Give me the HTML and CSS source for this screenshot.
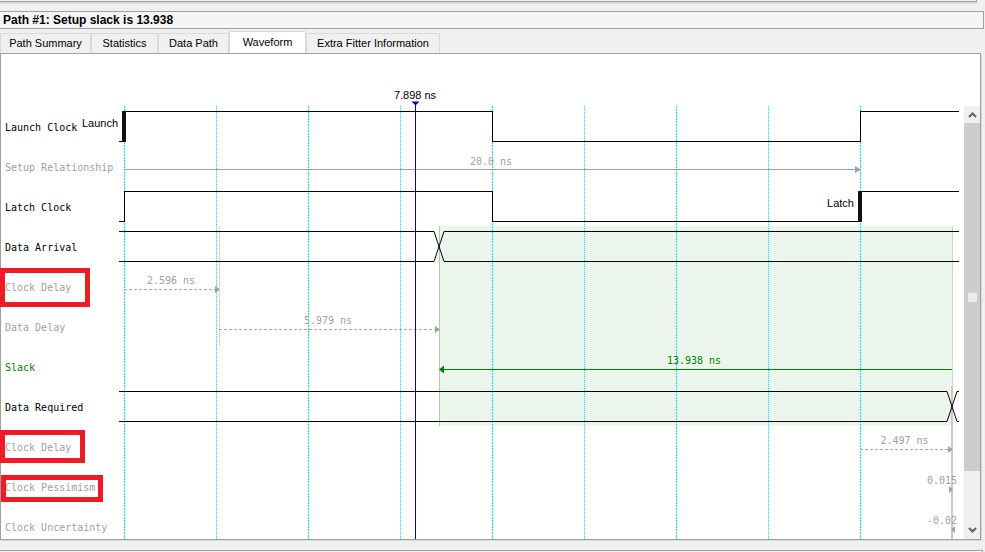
FILE: index.html
```html
<!DOCTYPE html>
<html lang="en">
<head>
<meta charset="utf-8">
<title>Waveform</title>
<link rel="stylesheet" href="styles.css">
</head>
<body>
<div class="app">
  <div class="prev-pane"></div>
  <div class="title-bar">Path #1: Setup slack is 13.938</div>
  <div class="tabs">
    <div class="tab tab-summary">Path Summary</div>
    <div class="tab tab-stats">Statistics</div>
    <div class="tab tab-data">Data Path</div>
    <div class="tab tab-wave is-active">Waveform</div>
    <div class="tab tab-fitter">Extra Fitter Information</div>
  </div>
  <div class="pane">
    <svg class="wave" width="963" height="485" viewBox="1 54 963 485" xmlns="http://www.w3.org/2000/svg">
      <!-- slack zone -->
      <rect class="zone" x="439" y="226" width="514" height="200"/>
      <line class="zone-left" x1="439.5" y1="226" x2="439.5" y2="426"/>
      <line class="zone-right" x1="952.5" y1="226" x2="952.5" y2="426"/>
      <line class="edge-mark" x1="219.5" y1="226" x2="219.5" y2="346"/>
      <line class="edge-mark wide" x1="952" y1="386" x2="952" y2="539"/>

      <!-- grid -->
      <g class="grid">
        <line x1="124.5" y1="106" x2="124.5" y2="539"/>
        <line class="minor" x1="216.5" y1="106" x2="216.5" y2="539"/>
        <line x1="308.5" y1="106" x2="308.5" y2="539"/>
        <line class="minor" x1="400.5" y1="106" x2="400.5" y2="539"/>
        <line x1="492.5" y1="106" x2="492.5" y2="539"/>
        <line class="minor" x1="584.5" y1="106" x2="584.5" y2="539"/>
        <line x1="676.5" y1="106" x2="676.5" y2="539"/>
        <line class="minor" x1="768.5" y1="106" x2="768.5" y2="539"/>
        <line x1="860.5" y1="106" x2="860.5" y2="539"/>
      </g>

      <!-- signals -->
      <polyline class="sig crisp" points="119,141.5 124.5,141.5 124.5,111.5 492.5,111.5 492.5,141.5 860.5,141.5 860.5,111.5 959,111.5"/>
      <rect class="edge-bar" x="122" y="111" width="4" height="31"/>
      <polyline class="sig crisp" points="119,221.5 124.5,221.5 124.5,191.5 492.5,191.5 492.5,221.5 860.5,221.5 860.5,191.5 959,191.5"/>
      <rect class="edge-bar" x="858" y="191" width="4" height="31"/>
      <polyline class="sig" points="119,231.5 434,231.5 444,261.5 959,261.5"/>
      <polyline class="sig" points="119,261.5 434,261.5 444,231.5 959,231.5"/>
      <polyline class="sig" points="119,391.5 947,391.5 957,421.5 959,421.5"/>
      <polyline class="sig" points="119,421.5 947,421.5 957,391.5 959,391.5"/>

      <!-- arrows -->
      <line class="arr-solid" x1="124" y1="169.5" x2="856" y2="169.5"/>
      <polygon class="head-gray" points="855,166 861,169.5 855,173"/>
      <line class="arr-dash" x1="124" y1="289.5" x2="215" y2="289.5"/>
      <polygon class="head-gray" points="215,286 220,289.5 215,293"/>
      <line class="arr-dash" x1="219" y1="329.5" x2="435" y2="329.5"/>
      <polygon class="head-gray" points="435,326 440,329.5 435,333"/>
      <line class="arr-green" x1="443" y1="369.5" x2="952" y2="369.5"/>
      <polygon class="head-green" points="439,369.5 444,365.5 444,373.5"/>
      <line class="arr-dash" x1="860" y1="449.5" x2="948" y2="449.5"/>
      <polygon class="head-gray" points="948,446 953,449.5 948,453"/>
      <polygon class="head-gray" points="949,486 953,489.5 949,493"/>
      <polygon class="head-gray" points="955,526 951,529.5 955,533"/>

      <!-- time cursor -->
      <line class="cursor" x1="415.5" y1="104" x2="415.5" y2="539"/>
      <polygon class="cursor-head" points="411.5,101.5 419.5,101.5 415.5,105.5"/>
      <text class="sans t-black" x="415" y="99" text-anchor="middle">7.898 ns</text>
      <text class="sans t-black" x="82" y="127">Launch</text>
      <text class="sans t-black" x="854" y="207" text-anchor="end">Latch</text>

      <!-- values -->
      <text class="t-gray" x="491" y="165" text-anchor="middle">20.0 ns</text>
      <text class="t-gray" x="171" y="284" text-anchor="middle">2.596 ns</text>
      <text class="t-gray" x="328" y="324" text-anchor="middle">5.979 ns</text>
      <text class="t-green" x="694" y="364" text-anchor="middle">13.938 ns</text>
      <text class="t-gray" x="904.5" y="444" text-anchor="middle">2.497 ns</text>
      <text class="t-gray" x="927" y="484">0.015</text>
      <text class="t-gray" x="927" y="524">-0.02</text>

      <!-- row labels -->
      <text class="t-black" x="5" y="131">Launch Clock</text>
      <text class="t-gray" x="5" y="171">Setup Relationship</text>
      <text class="t-black" x="5" y="211">Latch Clock</text>
      <text class="t-black" x="5" y="251">Data Arrival</text>
      <text class="t-gray" x="5" y="291">Clock Delay</text>
      <text class="t-gray" x="5" y="331">Data Delay</text>
      <text class="t-green" x="5" y="371">Slack</text>
      <text class="t-black" x="5" y="411">Data Required</text>
      <text class="t-gray" x="5" y="451">Clock Delay</text>
      <text class="t-gray" x="5" y="491">Clock Pessimism</text>
      <text class="t-gray" x="5" y="531">Clock Uncertainty</text>

      <!-- annotation marks -->
      <rect class="note" x="2.5" y="270.5" width="85" height="34"/>
      <rect class="note" x="2.5" y="432.5" width="80" height="28"/>
      <rect class="note" x="3.5" y="477.5" width="97" height="22"/>
    </svg>
    <div class="scrollbar">
      <div class="sb-btn">
        <svg width="9" height="6" viewBox="0 0 9 6"><polyline class="chev" points="1,5 4.5,1.5 8,5"/></svg>
      </div>
      <div class="sb-thumb"><span class="sb-grip"></span></div>
      <div class="sb-track"></div>
      <div class="sb-btn">
        <svg width="9" height="6" viewBox="0 0 9 6"><polyline class="chev" points="1,1 4.5,4.5 8,1"/></svg>
      </div>
    </div>
  </div>
  <div class="next-pane"></div>
</div>
</body>
</html>
```
FILE: styles.css
```css
html, body {
  margin: 0;
  padding: 0;
}
body {
  background: #f0f0f0;
  font-family: "Liberation Sans", Arial, sans-serif;
  color: #000;
  overflow: hidden;
  width: 985px;
  height: 552px;
}
.app {
  display: flex;
  flex-direction: column;
}
.prev-pane {
  width: 977px;
  height: 1px;
  margin-left: -1px;
  border-bottom: 1px solid #a0a0a0;
  border-right: 1px solid #a0a0a0;
  box-shadow: 0 2px 0 #dadada;
}
.title-bar {
  margin-top: 9px;
  margin-left: -1px;
  width: 980px;
  height: 16px;
  line-height: 16px;
  padding-left: 3px;
  border: 1px solid #a0a0a0;
  background: #f5f5f5;
  font-weight: bold;
  font-size: 12px;
  white-space: nowrap;
}
.tabs {
  display: flex;
  align-items: flex-end;
  height: 24px;
}
.tab {
  flex: none;
  box-sizing: border-box;
  height: 20px;
  line-height: 18px;
  border: 1px solid #d9d9d9;
  border-bottom: none;
  background: #f0f0f0;
  font-size: 11px;
  text-align: center;
  white-space: nowrap;
}
.tab.is-active {
  height: 22px;
  line-height: 20px;
  background: #fff;
}
.tab-summary { width: 91px; }
.tab-stats { width: 67px; }
.tab-data { width: 71px; }
.tab-wave { width: 77px; }
.tab-fitter { width: 134px; }

.pane {
  box-sizing: border-box;
  width: 981px;
  height: 487px;
  border: 1px solid #a0a0a0;
  background: #fff;
  display: flex;
  box-shadow: 1px 1px 0 #d9d9d9;
}
.next-pane {
  margin-top: 10px;
  width: 983px;
  margin-left: -1px;
  height: 4px;
  border-top: 1px solid #a0a0a0;
  border-right: 1px solid #a0a0a0;
  background: #f4f4f4;
}

/* waveform canvas */
.wave {
  display: block;
  flex: none;
  overflow: visible;
}
.wave text {
  font-family: "DejaVu Sans Mono", "Liberation Mono", monospace;
  font-size: 10px;
}
.wave text.sans {
  font-family: "Liberation Sans", Arial, sans-serif;
  font-size: 11px;
}
.t-black { fill: #000; }
.t-gray { fill: #a0a0a0; }
.t-green { fill: #008000; }

.zone { fill: #ebf5eb; }
.zone-left { stroke: #b2c9b2; stroke-width: 1; }
.zone-right { stroke: #bde3bd; stroke-width: 1; }
.edge-mark { stroke: #d6d6d6; stroke-width: 1; }
.edge-mark.wide { stroke: #cacaca; stroke-width: 2; }

.grid line {
  stroke: #00e5ff;
  stroke-width: 1;
  stroke-dasharray: 2 1;
  shape-rendering: crispEdges;
}
.grid line.minor {
  stroke-dasharray: 1 1;
}
.sig {
  fill: none;
  stroke: #000;
  stroke-width: 1;
}
.sig.crisp { shape-rendering: crispEdges; }
.edge-bar { fill: #111; }

.arr-solid { stroke: #a0a0a0; stroke-width: 1; shape-rendering: crispEdges; }
.arr-dash { stroke: #a8a8a8; stroke-width: 1; stroke-dasharray: 3 2; shape-rendering: crispEdges; }
.arr-green { stroke: #008000; stroke-width: 1; shape-rendering: crispEdges; }
.head-gray { fill: #a0a0a0; }
.head-green { fill: #008000; }

.cursor { stroke: #0000e0; stroke-width: 1; shape-rendering: crispEdges; }
.cursor-head { fill: #0000e0; }

.note {
  fill: none;
  stroke: #ed1c24;
  stroke-width: 5;
}

/* scrollbar */
.scrollbar {
  flex: none;
  width: 16px;
  margin-top: 52px;
  display: flex;
  flex-direction: column;
  background: #f0f0f0;
}
.sb-btn {
  height: 17px;
  display: flex;
  align-items: center;
  justify-content: center;
}
.chev {
  fill: none;
  stroke: #606060;
  stroke-width: 2;
}
.sb-thumb {
  height: 348px;
  background: #cdcdcd;
  display: flex;
  align-items: center;
  justify-content: center;
}
.sb-grip {
  width: 9px;
  height: 9px;
  background: #ececec;
}
.sb-track {
  height: 50px;
}
```
